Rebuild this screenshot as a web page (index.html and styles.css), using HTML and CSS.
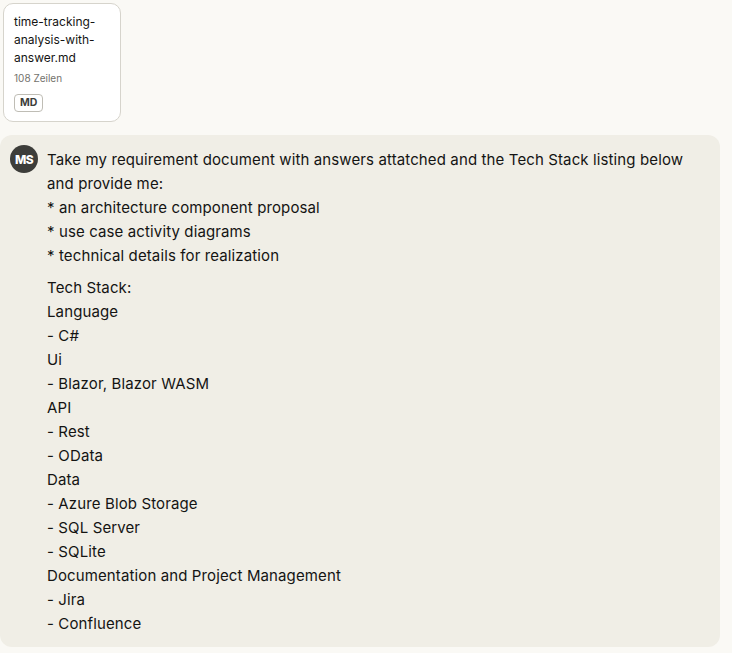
FILE: index.html
```html
<!DOCTYPE html>
<html lang="en">
<head>
<meta charset="utf-8">
<title>Chat</title>
<link rel="stylesheet" href="styles.css">
</head>
<body>
<div class="page">
  <div class="attachments">
    <div class="file-card">
      <div class="file-name">time-tracking-analysis-with-answer.md</div>
      <div class="file-meta">108 Zeilen</div>
      <div class="file-badge">MD</div>
    </div>
  </div>
  <div class="message">
    <div class="avatar">MS</div>
    <div class="content">
      <p>Take my requirement document with answers attatched and the Tech Stack listing below and provide me:<br>* an architecture component proposal<br>* use case activity diagrams<br>* technical details for realization</p>
      <p>Tech Stack:<br>Language<br>- C#<br>Ui<br>- Blazor, Blazor WASM<br>API<br>- Rest<br>- OData<br>Data<br>- Azure Blob Storage<br>- SQL Server<br>- SQLite<br>Documentation and Project Management<br>- Jira<br>- Confluence</p>
    </div>
  </div>
</div>
</body>
</html>
```
FILE: styles.css
```css
html, body {
  margin: 0;
  padding: 0;
  background: #faf9f5;
}
body {
  font-family: Inter, "Noto Sans", sans-serif;
  color: #141413;
}
.page {
  width: 720px;
  padding-top: 3px;
}
.attachments {
  display: flex;
  padding-left: 3px;
}
.file-card {
  width: 118px;
  height: 119px;
  box-sizing: border-box;
  background: #fff;
  border: 1px solid #d6d4cc;
  border-radius: 10px;
  padding: 9px 10px 0 10px;
  display: flex;
  flex-direction: column;
  align-items: flex-start;
}
.file-name {
  font-size: 12px;
  line-height: 18px;
  color: #141413;
  word-break: break-word;
  width: 92px;
}
.file-meta {
  font-size: 10px;
  line-height: 14px;
  color: #73726c;
  margin-top: 4px;
}
.file-badge {
  margin-top: 9px;
  font-size: 10.5px;
  font-weight: 700;
  line-height: 14px;
  padding: 1px 5px;
  border: 1px solid #bfbdb5;
  border-radius: 4px;
  color: #3d3d3a;
}
.message {
  margin-top: 13px;
  background: #f0eee6;
  border-radius: 12px;
  display: flex;
  gap: 9px;
  padding: 13px 10px 11px 10px;
}
.avatar {
  flex: none;
  width: 28px;
  height: 28px;
  border-radius: 50%;
  background: #3d3d3a;
  color: #fff;
  font-size: 12px;
  font-weight: 800;
  letter-spacing: -0.6px;
  display: flex;
  align-items: center;
  justify-content: center;
  margin-top: -3px;
}
.content {
  font-size: 15px;
  line-height: 24px;
  letter-spacing: 0.12px;
  max-width: 650px;
}
.content p {
  margin: 0;
}
.content p + p {
  margin-top: 8px;
}
```
